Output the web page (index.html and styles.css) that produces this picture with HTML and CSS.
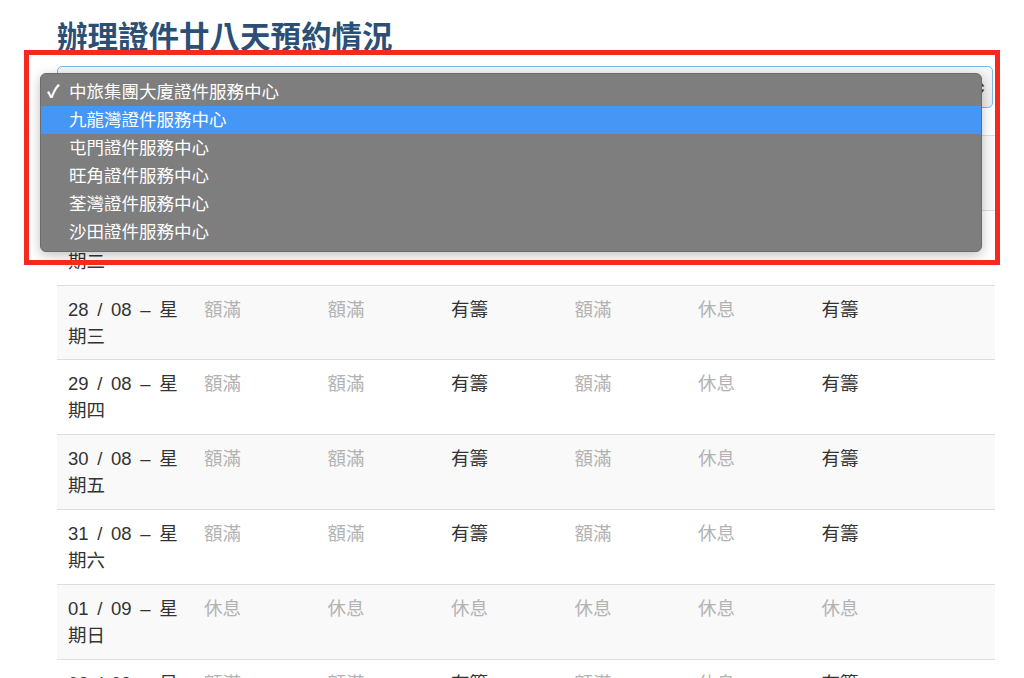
FILE: index.html
```html
<!DOCTYPE html>
<html lang="zh-Hant">
<head>
    <meta charset="UTF-8">
    <meta name="viewport" content="width=device-width, initial-scale=1.0">
    <title>辦理證件廿八天預約情況</title>
    <link rel="stylesheet" href="styles.css">
</head>
<body>
<div class="page">
    <h1>辦理證件廿八天預約情況</h1>
    <div class="select-box">
        <span class="select-arrows">
            <svg width="9" height="16" viewBox="0 0 9 16"><path d="M4.5 1 L8.5 6.5 H0.5 Z M4.5 15 L8.5 9.5 H0.5 Z" fill="#3a3a3a"/></svg>
        </span>
    </div>

    <table class="quota">
        <colgroup>
            <col class="col-date">
            <col class="col-slot"><col class="col-slot"><col class="col-slot">
            <col class="col-slot"><col class="col-slot"><col>
        </colgroup>
        <tbody>
            <tr>
                <td class="date">26 / 08 – 星期一</td>
                <td class="full">額滿</td><td class="full">額滿</td><td class="open">有籌</td>
                <td class="full">額滿</td><td class="full">休息</td><td class="open">有籌</td>
            </tr>
            <tr>
                <td class="date">27 / 08 – 星期二</td>
                <td class="full">額滿</td><td class="full">額滿</td><td class="open">有籌</td>
                <td class="full">額滿</td><td class="full">休息</td><td class="open">有籌</td>
            </tr>
            <tr>
                <td class="date">28 / 08 – 星期三</td>
                <td class="full">額滿</td><td class="full">額滿</td><td class="open">有籌</td>
                <td class="full">額滿</td><td class="full">休息</td><td class="open">有籌</td>
            </tr>
            <tr>
                <td class="date">29 / 08 – 星期四</td>
                <td class="full">額滿</td><td class="full">額滿</td><td class="open">有籌</td>
                <td class="full">額滿</td><td class="full">休息</td><td class="open">有籌</td>
            </tr>
            <tr>
                <td class="date">30 / 08 – 星期五</td>
                <td class="full">額滿</td><td class="full">額滿</td><td class="open">有籌</td>
                <td class="full">額滿</td><td class="full">休息</td><td class="open">有籌</td>
            </tr>
            <tr>
                <td class="date">31 / 08 – 星期六</td>
                <td class="full">額滿</td><td class="full">額滿</td><td class="open">有籌</td>
                <td class="full">額滿</td><td class="full">休息</td><td class="open">有籌</td>
            </tr>
            <tr>
                <td class="date">01 / 09 – 星期日</td>
                <td class="full">休息</td><td class="full">休息</td><td class="full">休息</td>
                <td class="full">休息</td><td class="full">休息</td><td class="full">休息</td>
            </tr>
            <tr>
                <td class="date">02 / 09 – 星期一</td>
                <td class="full">額滿</td><td class="full">額滿</td><td class="open">有籌</td>
                <td class="full">額滿</td><td class="full">休息</td><td class="open">有籌</td>
            </tr>
        </tbody>
    </table>
</div>

<!-- open dropdown of the select -->
<ul class="dropdown">
    <li class="checked"><span class="check">✓</span>中旅集團大廈證件服務中心</li>
    <li class="active">九龍灣證件服務中心</li>
    <li>屯門證件服務中心</li>
    <li>旺角證件服務中心</li>
    <li>荃灣證件服務中心</li>
    <li>沙田證件服務中心</li>
</ul>

<!-- annotation frame -->
<div class="highlight-frame"></div>
</body>
</html>
```

FILE: styles.css
```css
html, body {
    overflow: hidden;
}
body {
    margin: 0;
    background-color: #fff;
    font-family: "Liberation Sans", "Noto Sans CJK TC", sans-serif;
    color: #333;
}
.page {
    padding: 19px 29px 0 57px;
}
h1 {
    margin: 0 0 11px;
    font-size: 30.5px;
    line-height: 36px;
    font-weight: bold;
    color: #2c5075;
}
.select-box {
    position: relative;
    height: 40px;
    margin-right: 2px;
    border: 1px solid #7fb6ee;
    border-radius: 5px;
    background: linear-gradient(#f8f8f8, #ececec);
}
.select-arrows {
    position: absolute;
    right: 7px;
    top: 13px;
    line-height: 0;
}
.quota {
    width: 938px;
    margin-top: 27px;
    border-collapse: collapse;
    table-layout: fixed;
    font-size: 18.5px;
}
.col-date { width: 136px; }
.col-slot { width: 123.5px; }
.quota td {
    padding: 10px 11px 9.8px;
    line-height: 27px;
    vertical-align: top;
    border-top: 1px solid #dddddd;
}
.quota tr:nth-child(odd) td {
    background-color: #f9f9f9;
}
.quota .date { word-spacing: 3.5px; }
.quota .full { color: #b3b3b3; }
.quota .open { color: #333; }

.dropdown {
    position: absolute;
    left: 40px;
    top: 73px;
    width: 940px;
    margin: 0;
    padding: 4px 0 5px;
    list-style: none;
    background-color: #7e7e7e;
    border: 1px solid #6c6c6c;
    border-radius: 6px;
    box-shadow: 0 3px 12px rgba(0, 0, 0, 0.25);
    color: #fff;
    font-size: 17.5px;
}
.dropdown li {
    height: 28px;
    line-height: 28px;
    padding-left: 28px;
}
.dropdown .checked {
    position: relative;
}
.dropdown .check {
    position: absolute;
    left: 6px;
    font-weight: bold;
}
.dropdown .active {
    background-color: #4596f5;
}
.highlight-frame {
    position: absolute;
    left: 24px;
    top: 50px;
    width: 966px;
    height: 205px;
    border: 5px solid #f42a1e;
}
```
